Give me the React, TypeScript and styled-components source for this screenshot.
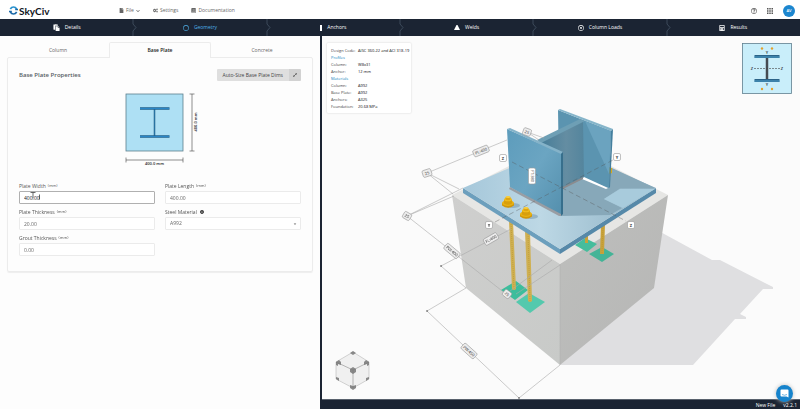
import React, { useState } from 'react';
import styled, { createGlobalStyle } from 'styled-components';
import { FaFile, FaCogs, FaBook, FaPaste, FaCalculator, FaChevronDown, FaExpandAlt, FaInfoCircle, FaCaretDown, FaRegCircle, FaRegDotCircle, FaRegQuestionCircle } from 'react-icons/fa';

const GlobalStyle = createGlobalStyle`
  * { box-sizing: border-box; }
  html, body, #root { height: 100%; }
  body { margin: 0; font: 5px/7px "Open Sans", "Noto Sans", sans-serif; color: #555; background: #fdfdfd; }
  button, input, select { font: inherit; color: inherit; margin: 0; }
  svg { display: block; }
`;

const Page = styled.div`
  min-height: 100vh;
  display: flex;
  flex-direction: column;
`;

const Header = styled.header`
  height: 19px;
  padding: 2px 5px 0 9px;
  display: flex;
  align-items: center;
  background: #fff;
`;

const Brand = styled.a`
  display: flex;
  align-items: center;
  gap: 1px;
  width: 110px;
  color: #10141c;
  text-decoration: none;
  font: 700 10px/12px Lato, sans-serif;
`;

const Menu = styled.nav`
  flex: 1;
  display: flex;
  gap: 13px;
`;

const MenuButton = styled.button`
  border: 0;
  padding: 0;
  background: none;
  display: flex;
  align-items: center;
  gap: 2px;
  color: #666;
`;

const HeaderTools = styled.div`
  display: flex;
  align-items: center;
  gap: 10px;
`;

const ToolButton = styled.button`
  border: 0;
  padding: 0;
  background: none;
  color: #555;
  font-size: 6px;
`;

const Avatar = styled.button`
  width: 12px;
  height: 12px;
  padding: 0;
  border: 0;
  border-radius: 50%;
  background: #1c86cf;
  color: #fff;
  font-size: 4px;
  line-height: 12px;
  font-weight: 600;
`;

const Steps = styled.nav`
  height: 17px;
  display: grid;
  grid-template-columns: repeat(6, 1fr);
  background: #1b2433;
`;

const Step = styled.button<{ $active?: boolean }>`
  position: relative;
  border: 0;
  padding: 0;
  background: none;
  display: flex;
  align-items: center;
  justify-content: center;
  gap: 5px;
  color: ${p => (p.$active ? '#4fb0e8' : '#fff')};
`;

const StepIcon = styled.span`
  font-size: 7px;
`;

const StepEdge = styled.svg`
  position: absolute;
  right: -4px;
  top: 0;
  width: 5px;
  height: 17px;
`;

const Main = styled.main`
  flex: 1;
  display: grid;
  grid-template-columns: 2fr 3fr;
`;

const FormSide = styled.section`
  padding: 6px 7px;
`;

const Tabs = styled.div`
  display: grid;
  grid-template-columns: repeat(3, 1fr);
  position: relative;
`;

const Tab = styled.button<{ $active?: boolean }>`
  height: 16px;
  padding: 0;
  border: 1px solid ${p => (p.$active ? '#ececec' : 'transparent')};
  border-bottom: 0;
  border-radius: 2px 2px 0 0;
  background: ${p => (p.$active ? '#fdfdfd' : 'none')};
  color: ${p => (p.$active ? '#222' : '#666')};
  font-weight: ${p => (p.$active ? 600 : 400)};
`;

const Card = styled.form`
  margin-top: -1px;
  padding: 11px 11px 15px;
  border: 1px solid #ececec;
  border-radius: 2px;
  box-shadow: 0 1px 1px #eee;
`;

const CardHead = styled.div`
  display: flex;
  align-items: center;
  justify-content: space-between;
`;

const Title = styled.h2`
  margin: 0;
  font-size: 6px;
  line-height: 8px;
  font-weight: 600;
  color: #555c63;
`;

const SplitButton = styled.div`
  display: flex;
  height: 12px;
  border-radius: 1px;
  overflow: hidden;
`;

const AutoSize = styled.button`
  border: 0;
  padding: 0 6px;
  background: #dfdfdf;
  color: #444;
`;

const Expand = styled.button`
  border: 0;
  width: 12px;
  padding: 0 4px;
  background: #d2d2d2;
  color: #333;
  font-size: 4px;
`;

const PlateDrawing = styled.svg`
  width: 84px;
  height: 80px;
  margin: 9px auto 13px;
`;

const Fields = styled.div`
  display: grid;
  grid-template-columns: 1fr 1fr;
  gap: 5px 10px;
`;

const Field = styled.div`
  position: relative;
`;

const Label = styled.label`
  display: flex;
  gap: 2px;
  height: 8px;
  white-space: nowrap;
  color: #555;
`;

const Unit = styled.span`
  font-size: 4px;
  line-height: 5px;
`;

const Input = styled.input`
  display: block;
  width: 100%;
  height: 13px;
  padding: 0 4px;
  border: 1px solid #ebebeb;
  border-radius: 1px;
  background: #fff;
  color: #666;
  outline: 0;
  &:focus { border-color: #b0b0b0; color: #222; }
`;

const Select = styled.select`
  display: block;
  width: 100%;
  height: 13px;
  padding: 0 4px;
  border: 1px solid #ebebeb;
  border-radius: 1px;
  background: #fff;
  color: #666;
  appearance: none;
`;

const SelectArrow = styled.span`
  position: absolute;
  right: 4px;
  bottom: 4px;
  font-size: 4px;
  color: #666;
  pointer-events: none;
`;

const InfoMark = styled.span`
  padding: 1px 0 0 1px;
  font-size: 4px;
  color: #333;
`;

const TextCursor = styled.svg`
  position: absolute;
  left: 10px;
  top: 8px;
  width: 12px;
  height: 9px;
  pointer-events: none;
`;

const Viewer = styled.section`
  display: flex;
  flex-direction: column;
  border-left: 2px solid #1b2433;
  background: #fbfbfb;
`;

const Stage = styled.div`
  position: relative;
  flex: 1;
  display: flex;
`;

const Scene = styled.svg`
  flex: 1;
  min-width: 0;
  font-family: "Open Sans", sans-serif;
`;

const Info = styled.dl`
  position: absolute;
  left: 5px;
  top: 7px;
  margin: 0;
  padding: 4px 2px 3px 4px;
  display: grid;
  grid-template-columns: 27px auto;
  font-size: 4px;
  line-height: 7px;
  white-space: nowrap;
  background: #fff;
  border-radius: 1px;
  box-shadow: 0 0 2px #ccc;
  color: #444;
  dt, dd { margin: 0; }
  dd { color: #111; }
`;

const InfoGroup = styled.dt`
  grid-column: 1 / -1;
  color: #1684c0;
`;

const MiniSection = styled.svg`
  position: absolute;
  right: 8px;
  top: 7px;
  width: 50px;
  height: 51px;
`;

const Chat = styled.button`
  position: absolute;
  right: 7px;
  bottom: -3px;
  width: 17px;
  height: 17px;
  padding: 4px;
  border: 0;
  border-radius: 50%;
  background: #1683cc;
  box-shadow: 0 0 4px #bbb;
  z-index: 1;
`;

const Status = styled.footer`
  height: 10px;
  padding: 1px 3px 0;
  display: flex;
  align-items: center;
  justify-content: flex-end;
  gap: 8px;
  background: #1b2433;
  border-top: 1px solid #59616d;
  color: #fff;
`;

const Version = styled.span`
  position: relative;
  z-index: 2;
`;

const info: [string, string?][] = [
  ['Design Code:', 'AISC 360-22 and ACI 318-19'],
  ['Profiles'],
  ['Column:', 'W8x31'],
  ['Anchor:', '12 mm'],
  ['Materials'],
  ['Column:', 'A992'],
  ['Base Plate:', 'A992'],
  ['Anchors:', 'A325'],
  ['Foundation:', '20.68 MPa'],
];

const steps = [
  { name: 'Details', icon: <FaPaste /> },
  { name: 'Geometry', icon: <FaRegCircle size={6} /> },
  { name: 'Anchors', icon: <svg width="2" height="6"><path d="M0 0h2v6H0z" fill="#fff" /></svg> },
  { name: 'Welds', icon: <svg width="6" height="5"><path d="M2.500 0h1L6 5H0z" fill="#fff" /></svg> },
  { name: 'Column Loads', icon: <FaRegDotCircle size={6} /> },
  { name: 'Results', icon: <FaCalculator size={6} /> },
];

const tags = [
  { x: 527, y: 132, a: 20, t: '25', w: 8 },
  { x: 481, y: 151, a: -22, t: 'PL:400', w: 16 },
  { x: 427, y: 173, a: -18, t: '25', w: 9 },
  { x: 407, y: 216, a: 30, t: '25', w: 8 },
  { x: 452, y: 251, a: 40, t: 'PW:400', w: 17 },
  { x: 491, y: 239, a: -30, t: 'FL:400', w: 15 },
  { x: 507, y: 294, a: 38, t: '25', w: 8 },
  { x: 469, y: 351, a: 42, t: 'PW:450', w: 17 },
  { x: 532, y: 176, a: 90, t: 'FT:380', w: 16 },
  { x: 503, y: 158, a: 0, t: 'Z', w: 7 },
  { x: 617, y: 157, a: 0, t: 'Y', w: 7 },
  { x: 489, y: 225, a: 0, t: 'Y', w: 7 },
  { x: 631, y: 225, a: 0, t: 'Z', w: 7 },
];

function Nut({ x, y }: { x: number; y: number }) {
  return (
    <g transform={`translate(${x} ${y})`}>
      <ellipse cx="5" cy="3.500" rx="7" ry="2.400" fill="#7d9db0" opacity=".6" />
      <path d="M-6 1v2.500q6 4.500 12 0V1z" fill="#cf960a" />
      <ellipse cy="1" rx="6" ry="3" fill="#e8b112" />
      <path d="M-4-2.500v4q4 2.600 8 0v-4z" fill="#d89f0c" />
      <ellipse cy="-2.500" rx="4" ry="1.800" fill="#f2bd1c" />
      <path d="M-2.500-5v2.600q2.500 1.200 5 0V-5z" fill="#dfa510" />
      <ellipse cy="-5" rx="2.500" ry="1.100" fill="#f9cd38" />
    </g>
  );
}

function BasePlateScene() {
  return (
    <Scene viewBox="322 36 478 363" role="img" aria-label="3D base plate model">
      <defs>
        <linearGradient id="leftFace" x2="1" y2="1"><stop stopColor="#cfcfce" /><stop offset="1" stopColor="#c8cac8" /></linearGradient>
        <linearGradient id="rightFace" x2="1" y2="1"><stop stopColor="#bebfbd" /><stop offset="1" stopColor="#b6b6b5" /></linearGradient>
        <linearGradient id="plateTop" x2="1"><stop stopColor="#a5c7da" /><stop offset=".4" stopColor="#bdd8e5" /><stop offset="1" stopColor="#8db1c4" /></linearGradient>
        <linearGradient id="flange" x2="1" y2="1"><stop stopColor="#5d9cbc" /><stop offset=".5" stopColor="#6ba5c2" /><stop offset="1" stopColor="#548fad" /></linearGradient>
        <linearGradient id="web" x2="1"><stop stopColor="#447c98" /><stop offset=".6" stopColor="#648da2" /><stop offset="1" stopColor="#54859d" /></linearGradient>
      </defs>
      <path d="M655 229L712 260H720L773 287V289H763L740 314L746 317V319H735L693 365H560z" fill="#dfdfe1" />
      <path d="M452 195L560 140L668 195L560 264z" fill="#e6e6e4" />
      <path d="M452 195L560 264V365L466 288z" fill="url(#leftFace)" />
      <path d="M560 264L668 195L654 288L560 365z" fill="url(#rightFace)" />
      <path d="M560 264V365" stroke="#adafad" strokeWidth=".5" />

      <path d="M501 290L516 281L528 290L515 300z" fill="#3dbd9c" />
      <path d="M516 302L529 293L545 302L530 313z" fill="#54c9ad" />
      <path d="M575 245L585 238L597 244L587 252z" fill="#46bd9c" />
      <path d="M589 254L602 247L614 254L602 262z" fill="#43b497" />
      <path d="M509 221h4L516 289Q514 291 512 289z" fill="#cfb052" />
      <path d="M525 231h5L532 301Q530 303 528 301z" fill="#cfb052" />
      <path d="M585 236h3v7h-3zM601 224h4l-1 30h-4z" fill="#c8a23a" />
      <path d="M511 222L514 289M528 232L530 301M603 226l-1 27" stroke="#b99331" strokeWidth=".6" strokeDasharray="1 1" fill="none" />

      <path d="M463 188L560 249V254L463 193z" fill="#6c9fbd" />
      <path d="M656 188L560 249V254L656 193z" fill="#5689a9" />
      <path d="M463 188L560 146L656 188L560 249z" fill="url(#plateTop)" />
      <path d="M561 216L610 215L622 208L604 199L620 188.500L655 188L612 168L520 180z" fill="#87a8b9" />
      <path d="M604 199L620 189H655L623 208z" fill="#a8cbdc" />
      <path d="M609 167l3 1v5l-3 1z" fill="#d9a915" />

      <path d="M558 110L611 131L609 188L583 178L559 170z" fill="#5b94b0" />
      <path d="M585 121L611 131L609 174z" fill="#6ba3bf" />
      <path d="M558 110L560 109L613 129L611 131z" fill="#86b5ca" />
      <path d="M611 131L613 129L610 187L609 188z" fill="#447f9e" />
      <path d="M539 141L583 120L584 178L563 188L545 190z" fill="url(#web)" />
      <path d="M537 140L580 119L585 121L541 143z" fill="#6e9fb5" />
      <path d="M584 177L608 188L606 189L582 179z" fill="#fff" />
      <path d="M563 187L583 177V179L563 189z" fill="#8b8b8e" />
      <path d="M507 129L561 153V216L510 187z" fill="url(#flange)" />
      <path d="M507 129L510 128L563 152L561 154z" fill="#85b3c9" />
      <path d="M561 154L563 152V214L561 216z" fill="#376f8c" />
      <path d="M510 187L561 214V216L559 216L509 189z" fill="#999da3" />

      <Nut x={508} y={202} />
      <Nut x={526} y={213} />

      <g fill="none" stroke="#555" strokeWidth=".6" strokeDasharray="5 3" opacity=".65">
        <path d="M512 162L626 221M495 222L613 160" />
      </g>
      <g fill="none" stroke="#aaa" strokeWidth=".6">
        <path d="M507 140L427 173L453 194M427 173L459 189M527 132L544 138M527 132L539 140" />
        <path d="M463 188L407 216L506 294M454 196L407 216M511 229L441 266L466 288L427 311L519 398L560 365M506 294L552 260M516 294L560 265" />
      </g>
      <g fill="#444"><circle cx="441" cy="266" r=".8" /><circle cx="427" cy="311" r=".8" /><circle cx="519" cy="398" r=".8" /></g>
      {tags.map(({ x, y, a, t, w }) => (
        <g key={`${x}-${y}`} transform={`translate(${x} ${y}) rotate(${a})`}>
          <rect x={-w / 2} y="-3.500" width={w} height="7" rx="1.500" fill={w === 7 || a === 90 ? '#fff' : '#ececec'} stroke="#999" strokeWidth=".6" />
          <text y="1.500" textAnchor="middle" fontSize="4" fontWeight={w === 7 ? 700 : 400} fill="#333">{t}</text>
        </g>
      ))}

      <g stroke="#aaa" strokeWidth=".5" fill="#f0f0f0">
        <path d="M353 352L369 362V379L353 388L336 379V362z" />
        <path d="M336 362L353 370L369 362M353 370V388" fill="none" stroke="#777" />
      </g>
      <g fill="#777" opacity=".85">
        <path d="M350 353l3-2 3 2-3 2zM336 362l3-2 2 2v3l-3-1v2l-2-1zM369 362l-3-2-2 2v3l3-1v2l2-1zM350 369l3-2 3 2v3l-3 2-3-2zM336 377l3 1v3l-3-2zM369 377l-3 1v3l3-2zM350 385l3 1 3-1v3l-3 2-3-2z" />
      </g>
    </Scene>
  );
}

function NumberField({ id, label, value, focus }: { id: string; label: string; value: string; focus?: boolean }) {
  const [text, setText] = useState(value);
  return (
    <Field>
      <Label htmlFor={id}>{label}<Unit>(mm)</Unit></Label>
      <Input id={id} value={text} autoFocus={focus} onChange={e => setText(e.target.value)} />
      {focus && (
        <TextCursor viewBox="0 0 12 9">
          <path d="M1.500 1.500h5M4 1.500v6" stroke="#444" strokeWidth=".8" />
          <path d="M10.500 3.500v5" stroke="#222" strokeWidth=".7" />
        </TextCursor>
      )}
    </Field>
  );
}

export default function App() {
  return (
    <Page>
      <GlobalStyle />
      <Header>
        <Brand href="#">
          <svg width="9" height="9" viewBox="0 0 9 9" fill="none" strokeWidth="1.700">
            <path d="M1.300 3Q2.500 1 4.500 1T7.700 3" stroke="#2b93cf" />
            <path d="M7.700 6Q6.500 8 4.500 8T1.300 6" stroke="#1d6aa8" />
            <path d="M0 5.500h2.800M6.200 3.500H9" stroke="#1d6aa8" strokeWidth="1.500" />
          </svg>
          SkyCiv
        </Brand>
        <Menu aria-label="Main">
          <MenuButton><FaFile />File<FaChevronDown size={4} /></MenuButton>
          <MenuButton><FaCogs />Settings</MenuButton>
          <MenuButton><FaBook />Documentation</MenuButton>
        </Menu>
        <HeaderTools>
          <ToolButton aria-label="Help"><FaRegQuestionCircle /></ToolButton>
          <ToolButton aria-label="Apps">
            <svg width="6" height="6" viewBox="0 0 8 8" fill="#555"><path d="M0 0h2v2H0zM3 0h2v2H3zM6 0h2v2H6zM0 3h2v2H0zM3 3h2v2H3zM6 3h2v2H6zM0 6h2v2H0zM3 6h2v2H3zM6 6h2v2H6z" /></svg>
          </ToolButton>
          <Avatar>AV</Avatar>
        </HeaderTools>
      </Header>
      <Steps aria-label="Design steps">
        {steps.map((s, i) => (
          <Step key={s.name} $active={i === 1}>
            <StepIcon>{s.icon}</StepIcon>{s.name}
            {i < 5 && <StepEdge viewBox="0 0 5 17"><path d="M1 0v5l3 3.500L1 12v5" fill="none" stroke="#4a5a6b" strokeWidth=".7" /></StepEdge>}
          </Step>
        ))}
      </Steps>
      <Main>
        <FormSide>
          <Tabs role="tablist">
            <Tab role="tab">Column</Tab>
            <Tab role="tab" aria-selected $active>Base Plate</Tab>
            <Tab role="tab">Concrete</Tab>
          </Tabs>
          <Card onSubmit={e => e.preventDefault()}>
            <CardHead>
              <Title>Base Plate Properties</Title>
              <SplitButton>
                <AutoSize type="button">Auto-Size Base Plate Dims</AutoSize>
                <Expand type="button" aria-label="Expand"><FaExpandAlt /></Expand>
              </SplitButton>
            </CardHead>
            <PlateDrawing viewBox="118 90 84 80" role="img" aria-label="Plate dimensions">
              <rect x="126" y="94" width="57" height="57" fill="#aee0f4" stroke="#5d7f8d" strokeWidth=".8" />
              <path d="M154.500 109V136" stroke="#225f87" strokeWidth="1.500" />
              <path d="M154.500 109V136" stroke="#2c86bb" strokeWidth=".5" />
              <path d="M140 108.500h29.500M140 136.500h29.500" stroke="#20618d" strokeWidth="2.400" />
              <path d="M140 108.500h29M140 136.500h29" stroke="#2a86c6" strokeWidth="1.200" />
              <path d="M126 160h57M126 157.500v5M183 157.500v5M192 94v57M189.500 94h5M189.500 151h5" stroke="#444" strokeWidth=".6" />
              <text x="154.500" y="165" textAnchor="middle" fontSize="4" fontWeight="600" fill="#222">400.0 mm</text>
              <text transform="translate(197 122) rotate(-90)" textAnchor="middle" fontSize="4" fontWeight="600" fill="#222">400.0 mm</text>
            </PlateDrawing>
            <Fields>
              <NumberField id="plate-width" label="Plate Width" value="400.00" focus />
              <NumberField id="plate-length" label="Plate Length" value="400.00" />
              <NumberField id="plate-thickness" label="Plate Thickness" value="20.00" />
              <Field>
                <Label htmlFor="steel">Steel Material <InfoMark><FaInfoCircle /></InfoMark></Label>
                <Select id="steel" defaultValue="A992"><option>A992</option><option>A36</option></Select>
                <SelectArrow><FaCaretDown /></SelectArrow>
              </Field>
              <NumberField id="grout-thickness" label="Grout Thickness" value="0.00" />
            </Fields>
          </Card>
        </FormSide>
        <Viewer>
          <Stage>
            <BasePlateScene />
            <Info>
              {info.map(([k, v], i) => v
                ? <React.Fragment key={i}><dt>{k}</dt><dd>{v}</dd></React.Fragment>
                : <InfoGroup key={i}>{k}</InfoGroup>)}
            </Info>
            <MiniSection viewBox="0 0 50 51">
              <rect x=".5" y=".5" width="49" height="50" fill="#c9eefa" stroke="#5f7f90" strokeWidth=".8" />
              <path d="M25 14v23" stroke="#454b52" strokeWidth="2.500" />
              <path d="M12.500 13.500h25M12.500 37.500h25" stroke="#2b6388" strokeWidth="3" />
              <path d="M12.500 14h25M12.500 38h25" stroke="#4ea2cc" strokeWidth="1" />
              <path d="M12 25.500h26" stroke="#444" strokeWidth=".6" strokeDasharray="2 1" />
              <g fill="#e3a02d"><circle cx="20" cy="5.500" r="1.200" /><circle cx="30" cy="5.500" r="1.200" /><circle cx="20" cy="46" r="1.200" /><circle cx="30" cy="46" r="1.200" /></g>
              <g fontSize="4" fontWeight="600" fill="#222" textAnchor="middle"><text x="25" y="11">Y</text><text x="25" y="43">Y</text><text x="10" y="27">Z</text><text x="40" y="27">Z</text></g>
            </MiniSection>
            <Chat aria-label="Chat">
              <svg width="9" height="9" viewBox="0 0 9 9"><path d="M1.500.5h6q1 0 1 1v7l-2-1h-5q-1 0-1-1v-5q0-1 1-1z" fill="#fff" /><path d="M2 5.500q2.500 1.500 5 0" fill="none" stroke="#1683cc" strokeWidth=".6" /></svg>
            </Chat>
          </Stage>
          <Status><span>New File</span><Version>v2.2.1</Version></Status>
        </Viewer>
      </Main>
    </Page>
  );
}
